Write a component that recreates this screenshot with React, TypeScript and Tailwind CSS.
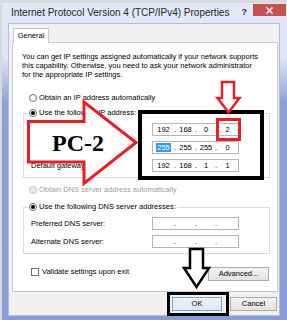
import React from "react";

function Radio({ checked, disabled }: { checked?: boolean; disabled?: boolean }) {
  return (
    <span
      className={
        disabled
          ? "w-[8px] h-[8px] rounded-full border border-[#c4c4c4] bg-[#ececec] flex items-center justify-center shrink-0"
          : "w-[8px] h-[8px] rounded-full border border-[#6d6d6d] bg-white flex items-center justify-center shrink-0"
      }
    >
      {checked && <span className="w-[4px] h-[4px] rounded-full bg-black" />}
    </span>
  );
}

function Dot() {
  return <span className="w-[2px] flex justify-center">.</span>;
}

function IpBox({ v, hl }: { v?: string[]; hl?: boolean }) {
  return (
    <div className="w-[87px] h-[13px] border border-[#b5b5b5] bg-white flex items-center text-[7.5px] leading-none text-black">
      <span className="w-[21px] flex justify-center">
        {v ? hl ? <span className="bg-[#3399ff] text-white px-[1px] py-[1px]">{v[0]}</span> : v[0] : ""}
      </span>
      <Dot />
      <span className="w-[19px] flex justify-center">{v ? v[1] : ""}</span>
      <Dot />
      <span className="w-[18px] flex justify-center">{v ? v[2] : ""}</span>
      <Dot />
      <span className="w-[21px] flex justify-center">{v ? v[3] : ""}</span>
    </div>
  );
}

function Row({ label, v, hl }: { label: string; v?: string[]; hl?: boolean }) {
  return (
    <div className="flex items-center h-[13px] pl-[7px]">
      <span className="w-[121px] leading-none">{label}</span>
      <IpBox v={v} hl={hl} />
    </div>
  );
}

export default function App() {
  return (
    <div className="relative w-[287px] h-[320px] overflow-hidden bg-[#d9d9d9] font-['Liberation_Sans',Arial,sans-serif] text-black">
      <div className="ml-[2px] mt-[3px] w-[285px] h-[317px] flex flex-col bg-[linear-gradient(to_bottom,#e2e8f6_0px,#dde4f4_55px,#8e9fd8_100px,#8a9bd6_100%)]">
        <div className="h-[20px] shrink-0 flex items-center pl-[9px]">
          <span className="text-[10px] leading-none text-[#262626] whitespace-nowrap">
            Internet Protocol Version 4 (TCP/IPv4) Properties
          </span>
          <span className="ml-auto mr-[6px] text-[9px] font-bold text-[#333] leading-none self-start mt-[5px]">?</span>
          <div className="self-start mt-[1px] mr-[1px] w-[33px] h-[12px] bg-[#c75050] flex items-center justify-center">
            <svg width="7" height="7" viewBox="0 0 7 7">
              <path d="M0.5 0.5 L6.5 6.5 M6.5 0.5 L0.5 6.5" stroke="white" strokeWidth="1.5" />
            </svg>
          </div>
        </div>
        <div className="ml-[6px] mr-[7px] h-[293px] border border-[#b3bdd8] bg-[#f0f0f0] flex flex-col pt-[4px] pl-[3px] pr-[1px] text-[7.5px]">
          <div className="ml-[1px] w-[36px] h-[15px] -mb-[1px] relative z-10 bg-white border border-b-0 border-[#cacaca] flex items-center justify-center leading-none">
            General
          </div>
          <div className="h-[250px] bg-white border border-[#cacaca] flex flex-col pt-[9px]">
            <p className="ml-[9px] leading-[9px] whitespace-nowrap">
              You can get IP settings assigned automatically if your network supports
              <br />
              this capability. Otherwise, you need to ask your network administrator
              <br />
              for the appropriate IP settings.
            </p>
            <div className="mt-[14px] ml-[16px] h-[10px] flex items-center gap-[2px]">
              <Radio />
              <span className="leading-none">Obtain an IP address automatically</span>
            </div>
            <fieldset className="mt-[5px] ml-[10px] mr-[7px] border border-[#dcdcdc] pb-[5px]">
              <legend className="ml-[4px] pl-[1px] pr-[1px]">
                <span className="flex items-center gap-[2px] h-[10px]">
                  <Radio checked />
                  <span className="leading-none">Use the following IP address:</span>
                </span>
              </legend>
              <div className="flex flex-col gap-[5px] pt-[5px]">
                <Row label="IP address:" v={["192", "168", "0", "2"]} />
                <Row label="Subnet mask:" v={["255", "255", "255", "0"]} hl />
                <Row label="Default gateway:" v={["192", "168", "1", "1"]} />
              </div>
            </fieldset>
            <div className="mt-[7px] ml-[16px] h-[10px] flex items-center gap-[2px]">
              <Radio disabled />
              <span className="leading-none text-[#9d9d9d]">Obtain DNS server address automatically</span>
            </div>
            <fieldset className="mt-[7px] ml-[10px] mr-[7px] border border-[#dcdcdc] pb-[5px]">
              <legend className="ml-[4px] pl-[1px] pr-[1px]">
                <span className="flex items-center gap-[2px] h-[10px]">
                  <Radio checked />
                  <span className="leading-none">Use the following DNS server addresses:</span>
                </span>
              </legend>
              <div className="flex flex-col gap-[5px] pt-[5px]">
                <Row label="Preferred DNS server:" />
                <Row label="Alternate DNS server:" />
              </div>
            </fieldset>
            <div className="mt-[13px] h-[14px] flex items-start pl-[18px] pr-[8px]">
              <div className="mt-[1px] flex items-center gap-[3px]">
                <span className="w-[8px] h-[8px] border border-[#707070] bg-white" />
                <span className="leading-[8px]">Validate settings upon exit</span>
              </div>
              <div className="ml-auto w-[61px] h-[14px] border border-[#acacac] bg-[linear-gradient(#f2f2f2,#e3e3e3)] flex items-center justify-center leading-none">
                Advanced...
              </div>
            </div>
          </div>
          <div className="mt-[5px] h-[14px] flex justify-end gap-[8px] pr-[1px]">
            <div className="w-[50px] h-[14px] border border-[#6fa5dc] bg-[linear-gradient(#eef3f9,#e1e8f1)] flex items-center justify-center leading-none">
              OK
            </div>
            <div className="w-[47px] h-[14px] border border-[#acacac] bg-[linear-gradient(#f2f2f2,#e3e3e3)] flex items-center justify-center leading-none">
              Cancel
            </div>
          </div>
        </div>
      </div>
      <svg className="absolute left-0 top-0 pointer-events-none" width="287" height="320" viewBox="0 0 287 320">
        <polygon
          points="28.5,121.5 84,121.5 84,102 136,142.5 84,183.5 84,162 28.5,162"
          fill="white"
          stroke="#ed1c24"
          strokeWidth="3"
          strokeLinejoin="miter"
        />
        <text
          x="52"
          y="151"
          fontFamily="'Liberation Serif', 'Times New Roman', serif"
          fontWeight="bold"
          fontSize="24"
          fill="black"
        >
          PC-2
        </text>
        <rect x="140" y="112" width="122" height="66" fill="none" stroke="black" strokeWidth="4" />
        <rect x="217.5" y="119.5" width="22" height="20" fill="none" stroke="#ed1c24" strokeWidth="3" />
        <polygon
          points="222,82 234,82 234,98 239.5,98 228.5,112.5 217.5,98 222,98"
          fill="white"
          stroke="#ed1c24"
          strokeWidth="2.5"
        />
        <polygon
          points="190,249 203,249 203,268 209,268 196.5,287 184,268 190,268"
          fill="white"
          stroke="black"
          strokeWidth="2.5"
        />
        <rect x="168.5" y="293.5" width="59" height="21" fill="none" stroke="black" strokeWidth="3" />
      </svg>
    </div>
  );
}
